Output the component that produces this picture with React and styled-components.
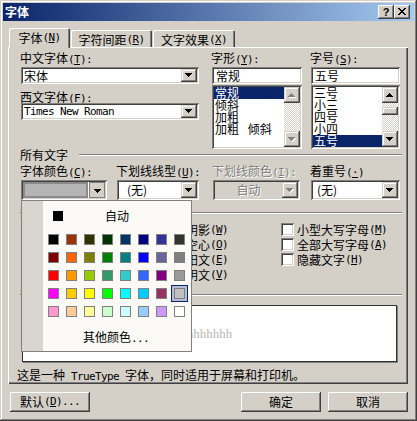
import React from "react";
import styled, { createGlobalStyle, css } from "styled-components";

const GlobalStyle = createGlobalStyle`
  html, body { margin: 0; padding: 0; background: #d4d0c8; }
  body {
    font-family: "Noto Sans CJK SC", "Liberation Sans", sans-serif;
    font-size: 12px;
    line-height: 12px;
    color: #000;
  }
  * { box-sizing: border-box; }
`;

const raised = css`
  box-shadow: inset -1px -1px #404040, inset 1px 1px #fff, inset -2px -2px #808080, inset 2px 2px #d4d0c8;
`;
const sunken = css`
  box-shadow: inset 1px 1px #808080, inset -1px -1px #fff, inset 2px 2px #404040, inset -2px -2px #d4d0c8;
`;

const Window = styled.div`
  width: 417px;
  height: 421px;
  padding: 3px;
  background: #d4d0c8;
  box-shadow: inset -1px -1px #404040, inset 1px 1px #d4d0c8, inset -2px -2px #808080, inset 2px 2px #fff;
  display: flex;
  flex-direction: column;
`;

const TitleBar = styled.div`
  height: 18px;
  flex: none;
  display: flex;
  align-items: center;
  padding: 0 4px 0 2px;
  background: linear-gradient(to right, #0a246a, #a6caf0);
`;

const Title = styled.div`
  flex: 1;
  color: #fff;
  font-weight: 700;
`;

const CapBtn = styled.div`
  width: 16px;
  height: 14px;
  background: #d4d0c8;
  ${raised};
  display: flex;
  align-items: center;
  justify-content: center;
  font: bold 11px "Liberation Sans", sans-serif;
  padding-bottom: 1px;
`;

const Body = styled.div`
  flex: 1;
  display: flex;
  flex-direction: column;
  padding: 0 6px 0 5px;
`;

const TabRow = styled.div`
  position: relative;
  z-index: 1;
  margin-top: 7px;
  height: 19px;
  display: flex;
  align-items: flex-end;
`;

const Tab = styled.div`
  width: ${(p) => p.$w}px;
  margin-left: 1px;
  height: ${(p) => (p.$active ? 20 : 17)}px;
  margin-bottom: ${(p) => (p.$active ? -1 : 0)}px;
  padding-top: ${(p) => (p.$active ? 0 : 2)}px;
  background: #d4d0c8;
  border-radius: 2px 2px 0 0;
  box-shadow: inset 1px 1px #fff, inset -1px 0 #404040, inset -2px 0 #808080;
  display: flex;
  align-items: center;
  justify-content: center;
  white-space: nowrap;
`;

const Panel = styled.div`
  position: relative;
  height: 337px;
  padding: 5px 8px 3px 13px;
  background: #d4d0c8;
  box-shadow: inset 1px 1px #fff, inset -1px -1px #404040, inset -2px -2px #808080;
  display: flex;
  flex-direction: column;
`;

const Lat = styled.span`
  font-family: "DejaVu Sans Mono", "Liberation Mono", monospace;
  font-size: 11px;
  letter-spacing: -0.62px;
  white-space: pre;
`;

const Hk = ({ k, colon }) => (
  <Lat>
    (<u>{k}</u>){colon ? ":" : ""}
  </Lat>
);

const Label = styled.div`
  height: 12px;
  margin-top: ${(p) => p.$mt || 0}px;
  margin-left: -1px;
  white-space: nowrap;
  color: ${(p) => (p.$disabled ? "#808080" : "#000")};
  text-shadow: ${(p) => (p.$disabled ? "1px 1px #fff" : "none")};
`;

const TopGrid = styled.div`
  display: flex;
  align-items: flex-start;
`;

const Col = styled.div`
  width: ${(p) => p.$w}px;
  margin-left: ${(p) => p.$ml || 0}px;
  display: flex;
  flex-direction: column;
`;

const Combo = styled.div`
  height: ${(p) => p.$h || 17}px;
  margin-top: ${(p) => p.$mt || 0}px;
  padding: 2px;
  background: ${(p) => (p.$disabled ? "#d4d0c8" : "#fff")};
  ${sunken};
  display: flex;
`;

const ComboText = styled.div`
  flex: 1;
  display: flex;
  align-items: center;
  justify-content: ${(p) => (p.$center ? "center" : "flex-start")};
  padding-left: ${(p) => p.$pl || 0}px;
  white-space: nowrap;
  color: ${(p) => (p.$disabled ? "#808080" : "#000")};
  text-shadow: ${(p) => (p.$disabled ? "1px 1px #fff" : "none")};
`;

const DropBtn = styled.div`
  width: 16px;
  flex: none;
  display: flex;
  align-items: center;
  justify-content: center;
  background: #d4d0c8;
  ${(p) =>
    p.$pressed
      ? css`
          border: 1px solid #808080;
          padding: 2px 0 0 2px;
        `
      : css`
          box-shadow: inset -1px -1px #404040, inset 1px 1px #d4d0c8, inset -2px -2px #808080, inset 2px 2px #fff;
        `}
`;

const Swatch = styled.div`
  flex: 1;
  margin: 0 1px 0 0;
  background: #b4b4b4;
  border: 2px solid #8a8a8a;
`;

const TextBox = styled.div`
  height: 17px;
  margin-top: 3px;
  padding: 2px 2px 2px 4px;
  background: #fff;
  ${sunken};
  display: flex;
  align-items: center;
`;

const ListBox = styled.div`
  height: 64px;
  margin-top: 1px;
  padding: 2px;
  background: #fff;
  ${sunken};
  display: flex;
`;

const Items = styled.div`
  flex: 1;
`;

const Item = styled.div`
  height: 12px;
  padding-left: 1px;
  line-height: 12px;
  white-space: pre;
  background: ${(p) => (p.$sel ? "#0a246a" : "transparent")};
  color: ${(p) => (p.$sel ? "#fff" : "#000")};
`;

const ScrollBar = styled.div`
  width: 16px;
  display: flex;
  flex-direction: column;
`;

const ScrollBtn = styled.div`
  height: 16px;
  flex: none;
  display: flex;
  align-items: center;
  justify-content: center;
  background: #d4d0c8;
  box-shadow: inset -1px -1px #404040, inset 1px 1px #d4d0c8, inset -2px -2px #808080, inset 2px 2px #fff;
`;

const Track = styled.div`
  flex: 1;
  background: repeating-conic-gradient(#fff 0 25%, #d4d0c8 0 50%) 0 0 / 2px 2px;
`;

const Thumb = styled.div`
  margin-top: 4px;
  height: 8px;
  background: #d4d0c8;
  box-shadow: inset -1px -1px #404040, inset 1px 1px #d4d0c8, inset -2px -2px #808080, inset 2px 2px #fff;
`;

const GroupHead = styled.div`
  height: 12px;
  margin-top: ${(p) => p.$mt || 0}px;
  margin-left: -1px;
  margin-right: -2px;
  display: flex;
  align-items: center;
  white-space: nowrap;
  &::after {
    content: "";
    flex: 1;
    margin-left: 11px;
    border-top: 1px solid #808080;
    border-bottom: 1px solid #fff;
  }
`;

const FieldRow = styled.div`
  display: flex;
  margin-top: 4px;
`;

const Field = styled.div`
  position: relative;
  width: ${(p) => p.$w}px;
  margin-left: ${(p) => p.$ml || 0}px;
  display: flex;
  flex-direction: column;
`;

const Popup = styled.div`
  position: absolute;
  top: 100%;
  left: 0;
  z-index: 10;
  width: 171px;
  height: 152px;
  border: 1px solid #808080;
  background: linear-gradient(to right, #d8d5cf 0 21px, #fbfaf7 21px);
  display: flex;
  flex-direction: column;
`;

const AutoRow = styled.div`
  margin-top: 8px;
  height: 14px;
  display: flex;
  align-items: center;
`;

const AutoSquare = styled.span`
  width: 10px;
  height: 10px;
  margin-left: 31px;
  background: #000;
`;

const AutoText = styled.span`
  margin-left: 42px;
`;

const ColorGrid = styled.div`
  margin: 11px 0 0 26px;
  display: grid;
  grid-template-columns: repeat(8, 11px);
  grid-auto-rows: 11px;
  gap: 7px;
`;

const Cell = styled.div`
  border: 1px solid #808080;
  background: ${(p) => p.$c};
  box-shadow: ${(p) => (p.$sel ? "0 0 0 2px #b6bdd2, 0 0 0 3px #0a246a" : "none")};
`;

const MoreColors = styled.div`
  margin: 14px 0 0 61px;
  height: 12px;
  white-space: nowrap;
`;

const Checks = styled.div`
  margin-top: 3px;
  display: grid;
  grid-template-columns: 149px 111px 1fr;
  grid-template-rows: repeat(4, 15px);
  grid-auto-flow: column;
`;

const Check = styled.div`
  display: flex;
  align-items: center;
  white-space: nowrap;
`;

const Box = styled.span`
  width: 13px;
  height: 13px;
  flex: none;
  margin-right: 3px;
  background: #fff;
  ${sunken};
`;

const Preview = styled.div`
  margin: 4px 3px 0 1px;
  height: 57px;
  background: #fff;
  border: 1px solid #303030;
  box-shadow: 1px 1px 0 #808080;
  display: flex;
  align-items: center;
  justify-content: center;
  font-family: "Liberation Serif", serif;
  font-size: 13px;
  color: #b8b8b8;
`;

const Note = styled.div`
  margin: 7px 0 0 -4px;
  height: 12px;
  white-space: nowrap;
`;

const BtnRow = styled.div`
  margin-top: 8px;
  padding-left: 2px;
  display: flex;
`;

const Button = styled.div`
  width: 80px;
  height: 20px;
  margin-left: ${(p) => p.$ml || 0}px;
  margin-right: ${(p) => (p.$push ? "auto" : "0")};
  background: #d4d0c8;
  ${raised};
  display: flex;
  align-items: center;
  justify-content: center;
  white-space: nowrap;
`;

const DOWN = "M0 0h7v1H0zM1 1h5v1H1zM2 2h3v1H2zM3 3h1v1H3z";
const UP = "M3 0h1v1H3zM2 1h3v1H2zM1 2h5v1H1zM0 3h7v1H0z";

function Arrow({ up, disabled }) {
  const d = up ? UP : DOWN;
  return (
    <svg width="8" height="5" viewBox="0 0 8 5" shapeRendering="crispEdges">
      {disabled && <path d={d} fill="#fff" transform="translate(1 1)" />}
      <path d={d} fill={disabled ? "#808080" : "#000"} />
    </svg>
  );
}

function CloseGlyph() {
  let d = "";
  for (let i = 0; i < 7; i++) {
    d += `M${i} ${i}h2v1h-2zM${6 - i} ${i}h2v1h-2z`;
  }
  return (
    <svg width="8" height="7" viewBox="0 0 8 7" shapeRendering="crispEdges">
      <path d={d} fill="#000" />
    </svg>
  );
}

function List({ items, sel, disabled, thumb }) {
  return (
    <ListBox>
      <Items>
        {items.map((t, i) => (
          <Item key={i} $sel={i === sel}>
            {t}
          </Item>
        ))}
      </Items>
      <ScrollBar>
        <ScrollBtn>
          <Arrow up disabled={disabled} />
        </ScrollBtn>
        <Track>{thumb && <Thumb />}</Track>
        <ScrollBtn>
          <Arrow disabled={disabled} />
        </ScrollBtn>
      </ScrollBar>
    </ListBox>
  );
}

const palette = [
  ["#000000", "#993300", "#333300", "#003300", "#003366", "#000080", "#333399", "#333333"],
  ["#800000", "#FF6600", "#808000", "#008000", "#008080", "#0000FF", "#666699", "#808080"],
  ["#FF0000", "#FF9900", "#99CC00", "#339966", "#33CCCC", "#3366FF", "#800080", "#999999"],
  ["#FF00FF", "#FFCC00", "#FFFF00", "#00FF00", "#00FFFF", "#00CCFF", "#993366", "#C0C0C0"],
  ["#FF99CC", "#FFCC99", "#FFFF99", "#CCFFCC", "#CCFFFF", "#99CCFF", "#CC99FF", "#FFFFFF"],
];

const effects = [
  ["删除线", "K"],
  ["双删除线", "G"],
  ["上标", "P"],
  ["下标", "B"],
  ["阴影", "W"],
  ["空心", "O"],
  ["阳文", "E"],
  ["阴文", "V"],
  ["小型大写字母", "M"],
  ["全部大写字母", "A"],
  ["隐藏文字", "H"],
];

export default function App() {
  return (
    <>
      <GlobalStyle />
      <Window>
        <TitleBar>
          <Title>字体</Title>
          <CapBtn>?</CapBtn>
          <CapBtn>
            <CloseGlyph />
          </CapBtn>
        </TitleBar>
        <Body>
          <TabRow>
            <Tab $w={61} $active>
              字体<Hk k="N" />
            </Tab>
            <Tab $w={81}>
              字符间距<Hk k="R" />
            </Tab>
            <Tab $w={82}>
              文字效果<Hk k="X" />
            </Tab>
          </TabRow>
          <Panel>
            <TopGrid>
              <Col $w={178}>
                <Label>
                  中文字体<Hk k="T" colon />
                </Label>
                <Combo $mt={3}>
                  <ComboText $pl={1}>宋体</ComboText>
                  <DropBtn>
                    <Arrow />
                  </DropBtn>
                </Combo>
                <Label $mt={7}>
                  西文字体<Hk k="F" colon />
                </Label>
                <Combo $mt={0}>
                  <ComboText $pl={1}>
                    <Lat>Times New Roman</Lat>
                  </ComboText>
                  <DropBtn>
                    <Arrow />
                  </DropBtn>
                </Combo>
              </Col>
              <Col $w={90} $ml={13}>
                <Label>
                  字形<Hk k="Y" colon />
                </Label>
                <TextBox>常规</TextBox>
                <List items={["常规", "倾斜", "加粗", "加粗\u2002 倾斜"]} sel={0} disabled />
              </Col>
              <Col $w={89} $ml={9}>
                <Label>
                  字号<Hk k="S" colon />
                </Label>
                <TextBox>五号</TextBox>
                <List items={["三号", "小三", "四号", "小四", "五号"]} sel={4} thumb />
              </Col>
            </TopGrid>

            <GroupHead>所有文字</GroupHead>

            <FieldRow>
              <Field $w={86}>
                <Label>
                  字体颜色<Hk k="C" colon />
                </Label>
                <Combo $h={20} $mt={3}>
                  <Swatch />
                  <DropBtn $pressed>
                    <Arrow />
                  </DropBtn>
                </Combo>
                <Popup>
                  <AutoRow>
                    <AutoSquare />
                    <AutoText>自动</AutoText>
                  </AutoRow>
                  <ColorGrid>
                    {palette.map((row, r) =>
                      row.map((c, i) => <Cell key={`${r}-${i}`} $c={c} $sel={r === 3 && i === 7} />)
                    )}
                  </ColorGrid>
                  <MoreColors>
                    其他颜色<Lat>...</Lat>
                  </MoreColors>
                </Popup>
              </Field>
              <Field $w={82} $ml={10}>
                <Label>
                  下划线线型<Hk k="U" colon />
                </Label>
                <Combo $h={20} $mt={3}>
                  <ComboText $pl={8}>(无)</ComboText>
                  <DropBtn>
                    <Arrow />
                  </DropBtn>
                </Combo>
              </Field>
              <Field $w={87} $ml={14}>
                <Label $disabled>
                  下划线颜色<Hk k="I" colon />
                </Label>
                <Combo $h={20} $mt={3} $disabled>
                  <ComboText $center $disabled>
                    自动
                  </ComboText>
                  <DropBtn>
                    <Arrow disabled />
                  </DropBtn>
                </Combo>
              </Field>
              <Field $w={89} $ml={11}>
                <Label>
                  着重号<Hk k="·" />
                </Label>
                <Combo $h={20} $mt={3}>
                  <ComboText $pl={4}>(无)</ComboText>
                  <DropBtn>
                    <Arrow />
                  </DropBtn>
                </Combo>
              </Field>
            </FieldRow>

            <GroupHead $mt={7}>效果</GroupHead>
            <Checks>
              {effects.map(([t, k]) => (
                <Check key={k}>
                  <Box />
                  {t}
                  <Hk k={k} />
                </Check>
              ))}
            </Checks>

            <GroupHead $mt={7}>预览</GroupHead>
            <Preview>hhhhhhh</Preview>

            <Note>
              这是一种<Lat> TrueType </Lat>字体，同时适用于屏幕和打印机。
            </Note>
          </Panel>
          <BtnRow>
            <Button $push>
              默认<Lat>
                (<u>D</u>)...
              </Lat>
            </Button>
            <Button>确定</Button>
            <Button $ml={7}>取消</Button>
          </BtnRow>
        </Body>
      </Window>
    </>
  );
}
